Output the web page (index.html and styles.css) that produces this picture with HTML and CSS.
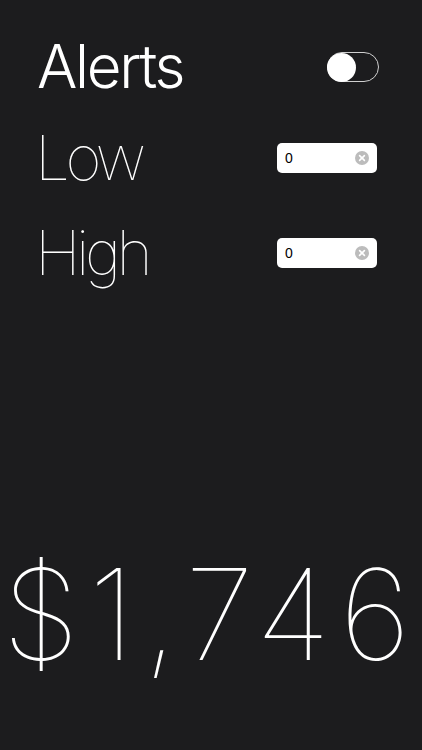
FILE: index.html
```html
<!DOCTYPE html>
<html>
<head>
<meta charset="utf-8">
<link rel="stylesheet" href="styles.css">
</head>
<body>
<div class="screen">
  <div class="row header">
    <h1 class="title">Alerts</h1>
    <div class="toggle"><span class="knob"></span></div>
  </div>
  <div class="row field">
    <span class="label">Low</span>
    <div class="input"><span class="value">0</span><span class="clear"><svg width="14" height="14" viewBox="0 0 14 14"><circle cx="7" cy="7" r="7" fill="#bcbcbc"/><path d="M4.6 4.6 L9.4 9.4 M9.4 4.6 L4.6 9.4" stroke="#fff" stroke-width="1.6" stroke-linecap="round"/></svg></span></div>
  </div>
  <div class="row field">
    <span class="label">High</span>
    <div class="input"><span class="value">0</span><span class="clear"><svg width="14" height="14" viewBox="0 0 14 14"><circle cx="7" cy="7" r="7" fill="#bcbcbc"/><path d="M4.6 4.6 L9.4 9.4 M9.4 4.6 L4.6 9.4" stroke="#fff" stroke-width="1.6" stroke-linecap="round"/></svg></span></div>
  </div>
  <div class="price">$1,746</div>
</div>
</body>
</html>
```
FILE: styles.css
```css
html, body {
  margin: 0;
  padding: 0;
  background: #1c1c1e;
}
.screen {
  height: 750px;
  display: flex;
  flex-direction: column;
  padding: 0 43px 0 37px;
  box-sizing: border-box;
  font-family: Inter, Roboto, "Liberation Sans", sans-serif;
  color: #fff;
}
.row {
  display: flex;
  align-items: center;
  justify-content: space-between;
}
.header {
  margin-top: 30px;
  height: 72px;
}
.title {
  margin: 0;
  font-size: 60px;
  font-weight: 300;
  line-height: 72px;
  letter-spacing: -2.3px;
}
.toggle {
  width: 50px;
  height: 28px;
  border: 1.5px solid #d0d0d0;
  border-radius: 16px;
  position: relative;
  margin-top: 2px;
}
.knob {
  position: absolute;
  left: -1px;
  top: 0px;
  width: 29px;
  height: 29px;
  border-radius: 50%;
  background: #fff;
}
.field {
  height: 95px;
}
.header + .field {
  margin-top: 8px;
}
.label {
  font-size: 62px;
  font-weight: 100;
  line-height: 95px;
  letter-spacing: -4.5px;
  margin-left: -2px;
}
.input {
  width: 100px;
  height: 30px;
  background: #fff;
  border-radius: 5px;
  display: flex;
  align-items: center;
  justify-content: space-between;
  padding: 0 8px 0 8px;
  box-sizing: border-box;
  margin-right: 2px;
}
.value {
  color: #000;
  font-family: "Liberation Sans", Arial, sans-serif;
  font-size: 14px;
}
.clear {
  display: flex;
}
.price {
  margin-top: auto;
  margin-bottom: 66px;
  margin-left: -37px;
  margin-right: -43px;
  text-align: center;
  font-size: 126px;
  font-weight: 100;
  line-height: 140px;
  letter-spacing: 9px;
  white-space: nowrap;
}
```
